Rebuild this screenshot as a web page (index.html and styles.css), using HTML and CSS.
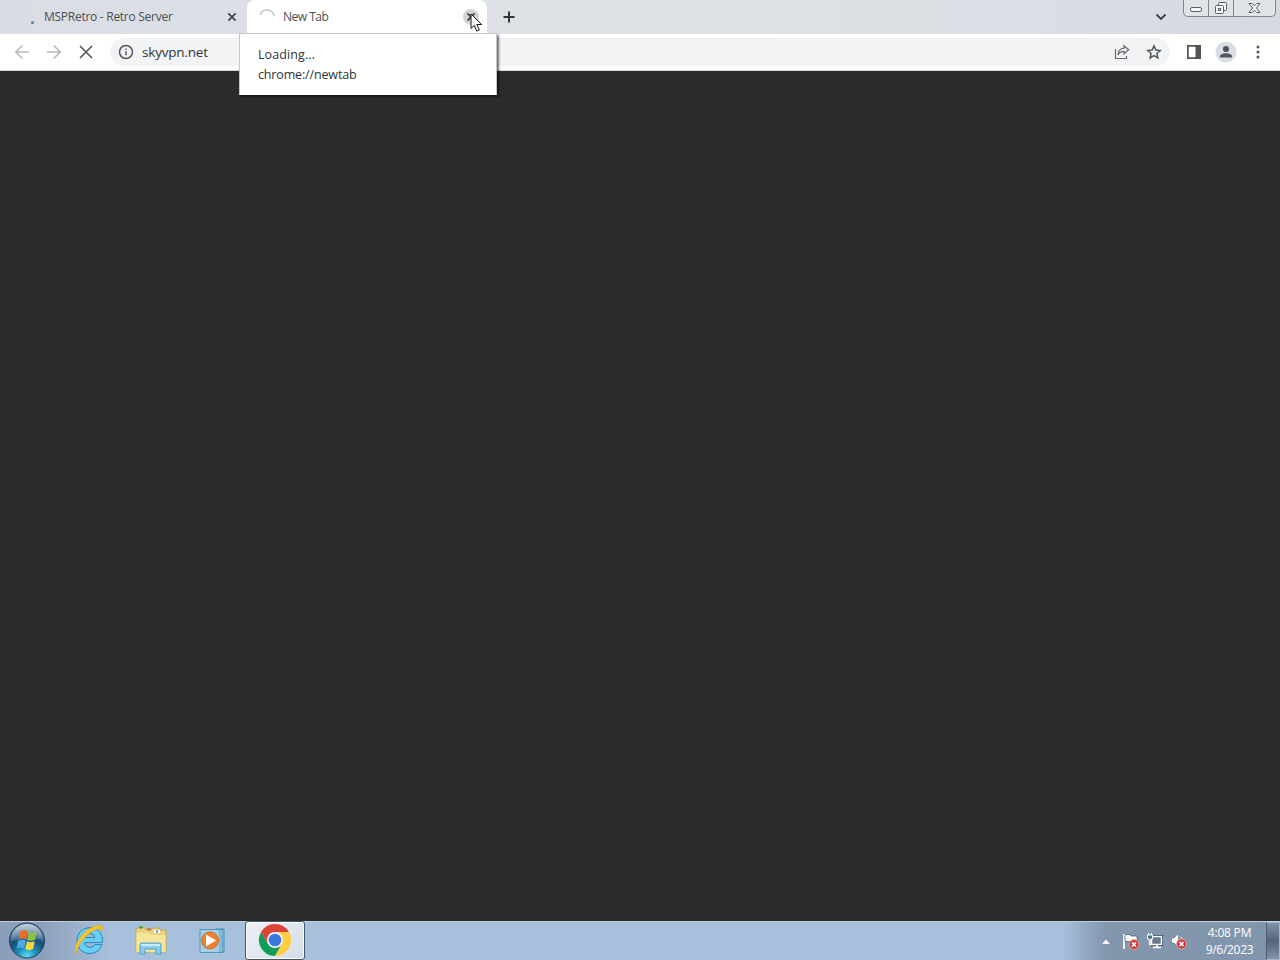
FILE: index.html
```html
<!doctype html>
<html>
<head>
<meta charset="utf-8">
<title>MSPRetro - Retro Server</title>
<link rel="stylesheet" href="styles.css">
</head>

<body>
<div class="desktop">
	<div class="tabstrip">
		<div class="tab">
			<span class="dot"></span>
			<span class="tab-title">MSPRetro - Retro Server</span>
			<svg class="tab-close" width="16" height="16" viewBox="0 0 16 16"><path d="M4.400 4.400l7.200 7.200M11.600 4.400l-7.200 7.200"/></svg>
		</div>
		<div class="tab active">
			<svg class="spinner" width="16" height="16" viewBox="0 0 16 16"><path d="M1.200 6A7.100 7.100 0 0 1 15 7"/></svg>
			<span class="tab-title">New Tab</span>
			<svg class="tab-close hover" width="16" height="16" viewBox="0 0 16 16"><path d="M4.400 4.400l7.200 7.200M11.600 4.400l-7.200 7.200"/></svg>
		</div>
		<svg class="plus" width="14" height="14" viewBox="0 0 14 14"><path d="M7 1.500v11M1.500 7h11"/></svg>
		<svg class="chevron" width="12" height="8" viewBox="0 0 12 8"><path d="M1.500 1.500L6 6l4.500-4.500"/></svg>
		<div class="winbtns">
			<span class="min"><svg width="14" height="6" viewBox="0 0 14 6"><rect x="1.500" y=".5" width="11" height="4" rx="1.500"/></svg></span>
			<span class="max"><svg width="14" height="14" viewBox="0 0 14 14"><rect x="4.500" y="1.500" width="8" height="8" rx="1"/><rect x="1.500" y="4.500" width="8" height="8" rx="1"/><rect x="4.500" y="7.500" width="2" height="2"/></svg></span>
			<span class="close"><svg width="13" height="12" viewBox="0 0 13 12"><path d="M1 1.500h3.300l2.200 2.300 2.200-2.300H12L8.300 6l3.700 4.500H8.700L6.500 8.200l-2.200 2.300H1L4.700 6z"/></svg></span>
		</div>
	</div>

	<div class="toolbar">
		<svg class="nav off" width="16" height="16" viewBox="0 0 16 16"><path d="M15 8H2M8.300 1.500L1.800 8l6.500 6.500"/></svg>
		<svg class="nav off" width="16" height="16" viewBox="0 0 16 16"><path d="M1 8h13M7.700 1.500L14.200 8l-6.500 6.500"/></svg>
		<svg class="nav" width="16" height="16" viewBox="0 0 16 16"><path d="M2 2l12 12M14 2L2 14"/></svg>
		<div class="omnibox">
			<svg class="info" width="16" height="16" viewBox="0 0 16 16"><circle cx="8" cy="8" r="6.500"/><path d="M8 7.200v4M8 4.400v1.600"/></svg>
			<span class="url">skyvpn.net</span>
			<svg class="share" width="16" height="16" viewBox="0 0 16 16"><path d="M1.500 5v9.500h11V12"/><path d="M10 1.800l4.700 4-4.700 4V7.400C7.300 7.400 5.300 8.500 4 11c.2-4 2.300-6.500 6-6.900z"/></svg>
			<svg class="star" width="16" height="16" viewBox="0 0 16 16"><path d="M8 1.900l1.800 4.200 4.500.4-3.400 3 1 4.500L8 11.600 4.100 14l1-4.500-3.400-3 4.500-.4z"/></svg>
		</div>
		<svg class="panel" width="14" height="14" viewBox="0 0 14 14"><path d="M0 0h14v14H0zM1.700 1.700v10.600H8.500V1.700z" fill-rule="evenodd"/></svg>
		<svg class="avatar" width="22" height="22" viewBox="0 0 22 22"><circle cx="11" cy="11" r="10.500" fill="#dadde3"/><circle cx="11" cy="8" r="3.100"/><path d="M5 16.500v-1.200c0-2.200 3.500-3.100 6-3.100s6 .9 6 3.100v1.200z"/></svg>
		<svg class="menu" width="4" height="14" viewBox="0 0 4 14"><circle cx="2" cy="2" r="1.500"/><circle cx="2" cy="7" r="1.500"/><circle cx="2" cy="12" r="1.500"/></svg>
	</div>

	<div class="page"></div>

	<div class="taskbar">
		<svg class="start" width="38" height="38" viewBox="0 0 38 38">
			<defs>
				<radialGradient id="orb" cx=".5" cy=".95" r=".9"><stop offset="0" stop-color="#5fe0f5"/><stop offset=".3" stop-color="#1b8fb8"/><stop offset=".6" stop-color="#164d78"/><stop offset="1" stop-color="#6d8ba6"/></radialGradient>
				<linearGradient id="gloss" x2="0" y2="1"><stop offset="0" stop-color="#fff" stop-opacity=".6"/><stop offset="1" stop-color="#fff" stop-opacity=".1"/></linearGradient>
			</defs>
			<circle cx="19" cy="18.500" r="17.500" fill="url(#orb)" stroke="#233f5e"/>
			<path d="M3 18a16 16 0 0 1 32 0c-9-3-22 4-32 0z" fill="url(#gloss)"/>
			<path d="M12.500 9.500c3-1.700 5-1.500 7.200-.2l-1.500 8c-2.500-1.400-4.700-1.300-7.500 0z" fill="#ee6a29"/>
			<path d="M20.800 10c2.400 1.200 4.700 1.200 7.900-.2l-1.700 8c-2.700 1.300-5 1.200-7.700 0z" fill="#8cc63f"/>
			<path d="M10.300 18.800c2.700-1.300 5-1.200 7.500.1l-1.600 7.700c-2.400-1.400-4.600-1.300-7.500 0z" fill="#4fa8e0"/>
			<path d="M19 19.300c2.700 1.200 5 1.200 7.700 0L25 27c-2.700 1.300-5 1.200-7.600 0z" fill="#fdd43b"/>
		</svg>
		<svg class="ie" width="32" height="32" viewBox="0 0 32 32">
			<path d="M29 20.500h-7.200c-1 1.800-2.500 2.700-4.800 2.700-3.200 0-5-1.900-5.200-4.600h17.700C30 9.500 25 3.700 17 3.700 9.600 3.700 4 9.200 4 16.700 4 24 9.300 29.500 16.700 29.500c6 0 10.800-3.300 12.300-9zM12 13.500c.5-2.400 2.400-3.900 5-3.900s4.400 1.500 4.800 3.900z" fill="#66cff2" fill-rule="evenodd" stroke="#2587bd"/>
			<path d="M3.500 29.500C-1 25 7 10 16.500 4.700 21.500 1.900 28 .3 29.500 3c.6 1.200.2 3.200-.7 5 .1-1.900-.3-3.200-2.200-3.200C18 5 4 19 3.500 29.500z" fill="#f8c62c" stroke="#e0a521" stroke-width=".7"/>
		</svg>
		<svg class="explorer" width="34" height="32" viewBox="0 0 34 32">
			<path d="M2 4l3-2h5l1 2h7l1-1h6l1 2h6v22H2z" fill="#e8d382" stroke="#c4a953"/>
			<path d="M2.500 8H15l2 2h14.500v17h-29z" fill="#f5e59b"/>
			<path d="M5 2.500h4" stroke="#37a34a" stroke-width="2"/><path d="M13 4.500h4" stroke="#d56637" stroke-width="2"/><path d="M20 6.500h6" stroke="#fff" stroke-width="3"/><path d="M22 6.500h2" stroke="#3388c8" stroke-width="2"/>
			<path d="M6 29v-9q0-2 2-2h17q2 0 2 2v9h-5v-5H11v5z" fill="#8acdf0" stroke="#509fcc"/>
			<path d="M7 20h19" stroke="#c6ecfb" stroke-width="2"/>
		</svg>
		<svg class="wmp" width="28" height="28" viewBox="0 0 28 28">
			<path d="M17 2h8v23h-8z" fill="#91c7e8" stroke="#438bb8"/>
			<path d="M15 2.500h8v23h-8z" fill="#c5e5f5" stroke="#438bb8"/>
			<path d="M1 2.500h20v23H1z" fill="#a3cfe9" stroke="#4b98c5"/>
			<circle cx="11" cy="13.500" r="8.500" fill="#ee812d" stroke="#d66b23"/>
			<path d="M7 7.500v12l10-6z" fill="#fff"/>
		</svg>
		<div class="task">
			<svg width="34" height="34" viewBox="0 0 34 34">
				<path d="M3.100 9A16 16 0 0 1 30.900 9H17z" fill="#da4437"/>
				<path d="M3.100 9A16 16 0 0 0 17 33l7-12-14 0z" fill="#109d58"/>
				<path d="M30.900 9A16 16 0 0 1 17 33l6.900-12L20 9z" fill="#ffcd41"/>
				<path d="M3.100 9L10 21l7-12z" fill="#da4437"/>
				<circle cx="17" cy="17" r="8" fill="#f5f5f5"/><circle cx="17" cy="17" r="6.300" fill="#3c76df"/>
			</svg>
		</div>
		<div class="tray">
			<svg class="up" width="8" height="5" viewBox="0 0 8 5"><path d="M0 5l4-4.500L8 5z"/></svg>
			<svg class="flag" width="18" height="18" viewBox="0 0 18 18">
				<path d="M2 2v15" stroke="#eef2f5" stroke-width="2"/><path d="M3 2.500h5l1 1.500h6v7H9L8 9.500H3z" fill="#fff" stroke="#455568" stroke-width=".7"/>
				<circle cx="12" cy="12.500" r="5" fill="#ce3d36" stroke="#f0b9b3" stroke-width=".7"/><path d="M10 10.500l4 4M14 10.500l-4 4" stroke="#fff" stroke-width="1.600"/>
			</svg>
			<svg class="net" width="18" height="18" viewBox="0 0 18 18">
				<path d="M5.500 4.500h10v8h-10z" fill="#66798f" stroke="#2d3e52" stroke-width="3"/><path d="M5.500 4.500h10v8h-10z" fill="#66798f" stroke="#fff" stroke-width="1.500"/>
				<path d="M7 15.500h8M11 13v2" stroke="#fff" stroke-width="1.600"/>
				<path d="M1.500 3h5v4H4.700v6H3.300V7H1.500z" fill="#586b80" stroke="#fff"/><path d="M2.500 1v2M5.500 1v2" stroke="#fff"/>
			</svg>
			<svg class="vol" width="18" height="18" viewBox="0 0 18 18">
				<path d="M1.500 6H4l4.500-4.500v14L4 11H1.500z" fill="#fff" stroke="#647488" stroke-width=".6"/><path d="M10.500 4.500q2 2 1 5" fill="none" stroke="#dbe2e9"/>
				<circle cx="11.500" cy="12" r="5" fill="#ce3d36" stroke="#f0b9b3" stroke-width=".7"/><path d="M9.500 10l4 4M13.500 10l-4 4" stroke="#fff" stroke-width="1.600"/>
			</svg>
			<div class="clock"><span class="time">4:08 PM</span><span class="date">9/6/2023</span></div>
			<div class="show"></div>
		</div>
	</div>

	<div class="tip">
		<div class="tip-title">Loading...</div>
		<div class="tip-url">chrome://newtab</div>
	</div>
	<svg class="cursor" width="13" height="20" viewBox="0 0 13 20"><path d="M1 1v14.500l3.300-3.100 2.400 5.700 2.600-1.100-2.400-5.500h4.700z"/></svg>
</div>
</body>
</html>
```
FILE: styles.css
```css
* {margin:0; padding:0; box-sizing:border-box;}
body {overflow:hidden; font-family:"Open Sans","Noto Sans",sans-serif;}
svg {display:block; flex:none;}
.desktop {width:1280px; height:960px; position:relative; display:flex; flex-direction:column; background:#2b2b2b;}

.tabstrip {height:34px; display:flex; flex:none; background:linear-gradient(to right,#dadde4,#dee2e7 50%,#d9dfe4 80%,#d5d9e0);}
.tab {width:247px; height:34px; display:flex; align-items:center; padding-left:31px; color:#4b4e53; font-size:12px; letter-spacing:-.27px;}
.tab.active {width:240px; padding-left:12px; background:#fff; border-radius:8px 8px 0 0; letter-spacing:-.5px;}
.dot {width:3px; height:3px; margin:10px 10px 0 0; border-radius:2px; background:#687b9c;}
.tab-title {flex:1; white-space:nowrap; line-height:16px;}
.tab-close {margin-right:7px; fill:none; stroke:#41454a; stroke-width:1.8;}
.tab-close.hover {margin-right:8px; border-radius:8px; background:#d4d4d6;}
.spinner {margin-right:8px; fill:none; stroke:#c2c6cd; stroke-width:1.6;}
.plus {margin:10px 0 0 15px; fill:none; stroke:#33373b; stroke-width:2;}
.chevron {margin:13px 16px 0 auto; fill:none; stroke:#3c4043; stroke-width:1.8;}
.winbtns {display:flex; width:93px; height:17px; margin-right:4px; border:1px solid #80858d; border-top:0; border-radius:0 0 5px 5px; background:#e0e4e9;}
.winbtns span {display:flex; justify-content:center; align-items:center; border-left:1px solid #80858d;}
.winbtns .min {width:24px; border-left:0; padding-top:4px;}
.winbtns .max {width:25px; padding-right:1px;}
.winbtns .close {width:42px; padding-right:1px;}
.winbtns svg {fill:#f5f6f8; stroke:#5c6168;}

.toolbar {height:37px; display:flex; flex:none; align-items:center; padding-left:14px; background:#fff; border-bottom:1px solid #d5d6d8;}
.nav {margin-right:16px; fill:none; stroke:#58595c; stroke-width:1.7;}
.nav.off {stroke:#b9babc;}
.omnibox {width:1060px; height:28px; display:flex; align-items:center; padding:0 8px; border-radius:14px; background:#f1f3f4;}
.info {margin-right:8px; fill:none; stroke:#55585c; stroke-width:1.5;}
.url {flex:1; font-size:13.5px; line-height:20px; letter-spacing:-.2px; color:#34373a;}
.share {margin-right:16px; fill:none; stroke:#66696d; stroke-width:1.2;}
.star {fill:none; stroke:#55585c; stroke-width:1.5;}
.panel {margin-left:17px; fill:#4f5256;}
.avatar {margin-left:14px; fill:#4e5663;}
.menu {margin-left:19px; fill:#55585c;}

.page {flex:1; background:#2b2b2b;}

.taskbar {height:39px; display:flex; flex:none; align-items:center; padding-left:8px; border-top:1px solid #bdcee1; background:linear-gradient(to right,#8c9fba 0,#8c9fba 40px,#a7c0dc 110px,#a7c0dc);}
.ie {margin:-2px 0 0 27px;}
.explorer {margin-left:29px;}
.wmp {margin-left:31px;}
.task {width:60px; height:39px; margin:-1px 0 0 18px; padding-bottom:1px; display:flex; justify-content:center; align-items:center; border:1px solid #475569; border-radius:3px; background:linear-gradient(135deg,#eef1f5,#d4dde8); box-shadow:inset 0 0 0 1px #fff;}
.tray {height:38px; margin-left:auto; display:flex; align-items:center; padding-left:40px; background:linear-gradient(to right,#a7c0dc,#8296ae 44px,#8195ad);}
.up {fill:#f4f7fa;}
.flag {margin-left:12px;}
.net {margin-left:6px;}
.vol {margin-left:6px;}
.clock {width:77px; display:flex; flex-direction:column; align-items:center; padding-left:6px; color:#fff; font-size:12px; line-height:17px; letter-spacing:-.3px;}
.time {letter-spacing:-.2px;}
.show {width:14px; height:38px; margin-left:1px; border:1px solid #a9b5c4; border-left-color:#4d5e74; background:linear-gradient(#7e8fa6,#53647c 50%,#8292a7);}

.tip {position:absolute; left:239px; top:33px; width:258px; height:62px; padding:11px 18px; border:1px solid #c4c6c9; border-bottom-color:#fff; background:#fff; box-shadow:2px 2px 2px rgba(0,0,0,.55); font-size:12.5px; line-height:20px; letter-spacing:-.15px; color:#303236;}
.tip-title {font-weight:500; letter-spacing:.1px;}
.cursor {position:absolute; left:470px; top:13px; fill:#fff; stroke:#151515;}
```
